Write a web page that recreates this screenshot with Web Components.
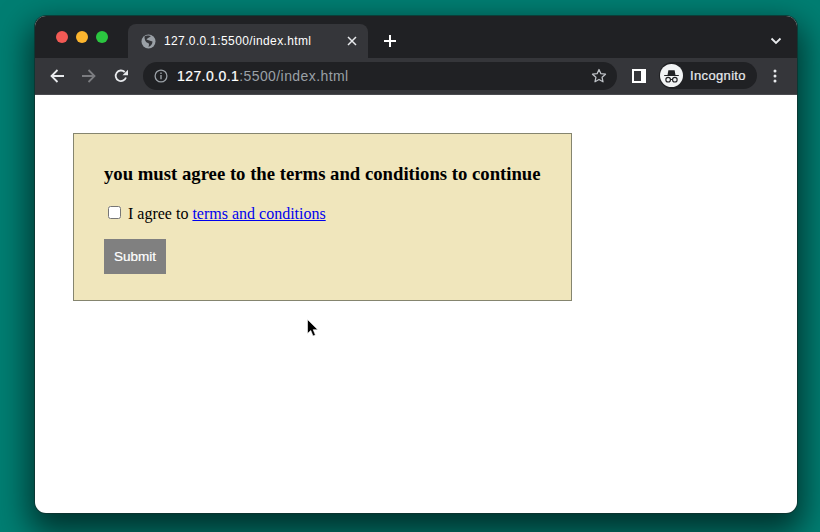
<!DOCTYPE html>
<html>
<head>
<meta charset="utf-8">
<title>terms</title>
<style>
html, body { margin: 0; height: 532px; overflow: hidden; }
body { background: #007e72; font-family: "Liberation Serif", serif; }
</style>
</head>
<body>
<browser-window>
  <terms-card>
    <span slot="title">you must agree to the terms and conditions to continue</span>
  </terms-card>
</browser-window>
<script>
class tabStrip extends HTMLElement {
    constructor() {
        super();
        this.attachShadow({ mode: 'open' });
    }
    connectedCallback() {
        this.shadowRoot.innerHTML = `
        <style>
            :host { display: flex; height: 42px; background: #202124; box-sizing: border-box; padding-top: 8px; color: #fff; font: 12px "Liberation Sans", Arial, sans-serif; }
            .lights { display: flex; gap: 8px; width: 93px; box-sizing: border-box; padding: 7px 0 0 21px; }
            .lights i { width: 12px; height: 12px; border-radius: 50%; }
            .tab { display: flex; align-items: center; width: 240px; height: 34px; background: #35363a; border-radius: 8px 8px 0 0; box-sizing: border-box; padding: 0 0 0 13px; }
            .tab span { margin-left: 8px; width: 183px; white-space: nowrap; letter-spacing: .37px; }
            .add { margin: 10px 0 0 15px; }
            .more { margin: 13px 15px 0 auto; }
            svg { display: block; flex: none; }
        </style>
        <div class="lights"><i style="background:#f25a55"></i><i style="background:#fcb52e"></i><i style="background:#2bc640"></i></div>
        <div class="tab">
            <svg width="15" height="15" viewBox="0 0 15 15"><circle cx="7.500" cy="7.500" r="7" fill="#9aa0a6"/><path d="M3.500 2.500C5 1.500 8 1 10 2 8.500 3.500 6.500 4 5.500 5.500 7 6.500 9.500 6.500 11.500 7.500 11.500 10 10 12 7.500 13 8 11 8.500 9.500 7 9 5.500 8.500 3.500 7 3.500 2.500z" fill="#35363a"/></svg>
            <span>127.0.0.1:5500/index.html</span>
            <svg width="10" height="10" viewBox="0 0 10 10" stroke="#e8eaed" stroke-width="1.500" fill="none"><path d="M1 1l8 8M9 1l-8 8"/></svg>
        </div>
        <svg class="add" width="14" height="14" viewBox="0 0 14 14" stroke="#fff" stroke-width="2" fill="none"><path d="M7 1v12M1 7h12"/></svg>
        <svg class="more" width="12" height="8" viewBox="0 0 12 8" stroke="#e8eaed" stroke-width="1.800" fill="none"><path d="M1.500 1.500 6 6l4.500-4.500"/></svg>
        `;
    }
}

class browserToolbar extends HTMLElement {
    constructor() {
        super();
        this.attachShadow({ mode: 'open' });
    }
    connectedCallback() {
        this.shadowRoot.innerHTML = `
        <style>
            :host { display: flex; align-items: center; height: 37px; background: #35363a; border-bottom: 1px solid #4a4b4f; box-sizing: border-box; padding: 0 0 1px 15px; font: 14px "Liberation Sans", Arial, sans-serif; color: #fff; }
            svg { display: block; flex: none; }
            .nav { display: flex; align-items: center; gap: 18px; }
            .omni { display: flex; align-items: center; width: 474px; height: 28px; margin-left: 15px; background: #202124; border-radius: 14px; box-sizing: border-box; padding: 0 10px 0 11px; }
            .url { margin-left: 9px; flex: 1; color: #9aa0a6; white-space: nowrap; letter-spacing: .42px; }
            .url b { font-weight: 400; color: #fff; -webkit-text-stroke: .2px #fff; }
            .side { margin-left: 15px; }
            .who { display: flex; align-items: center; width: 98px; height: 27px; margin-left: 13px; background: #202124; border-radius: 14px; box-sizing: border-box; padding-left: 1px; font-size: 13px; letter-spacing: .35px; color: #e8eaed; -webkit-text-stroke: .2px #e8eaed; }
            .who span { margin-left: 7px; }
            .dots { margin-left: 16px; }
        </style>
        <div class="nav">
            <svg width="14" height="14" viewBox="0 0 14 14" stroke="#e8eaed" stroke-width="1.800" fill="none"><path d="M14 7H1.500M7.500 1 1.500 7l6 6"/></svg>
            <svg width="14" height="14" viewBox="0 0 14 14" stroke="#7b7c80" stroke-width="1.800" fill="none"><path d="M0 7h12.500M6.500 1l6 6-6 6"/></svg>
            <svg width="14" height="14" viewBox="0 0 14 14" fill="none"><path d="M12 8.500A5.300 5.300 0 1 1 10.700 3" stroke="#e8eaed" stroke-width="1.800"/><path d="M8.500 6.200H14V.7z" fill="#e8eaed"/></svg>
        </div>
        <div class="omni">
            <svg width="14" height="14" viewBox="0 0 14 14"><circle cx="7" cy="7" r="5.900" fill="none" stroke="#9aa0a6" stroke-width="1.300"/><path d="M6.300 6h1.400v4.200H6.300zM6.300 3.600h1.400V5H6.300z" fill="#9aa0a6"/></svg>
            <div class="url"><b>127.0.0.1</b>:5500/index.html</div>
            <svg width="16" height="15" viewBox="0 0 16 15"><path d="M8 1.500l1.900 4.200 4.600.5-3.400 3.100.9 4.500L8 11.500l-4 2.300.9-4.500L1.500 6.200l4.600-.5z" fill="none" stroke="#bdc1c6" stroke-width="1.300" stroke-linejoin="round"/></svg>
        </div>
        <svg class="side" width="14" height="14" viewBox="0 0 14 14"><path d="M0 0h14v14H0z" fill="#fff"/><path d="M2 2h7v10H2z" fill="#35363a"/></svg>
        <div class="who">
            <svg width="23" height="23" viewBox="0 0 22 22"><circle cx="11" cy="11" r="11" fill="#f1f3f4"/><path d="M4 10.500h14v1H4zM7.200 10.500 8 6h6l.8 4.500z" fill="#202124"/><circle cx="7.800" cy="15" r="2.200" fill="none" stroke="#202124" stroke-width="1.100"/><circle cx="14.200" cy="15" r="2.200" fill="none" stroke="#202124" stroke-width="1.100"/><path d="M10 14.800h2" stroke="#202124"/></svg>
            <span>Incognito</span>
        </div>
        <svg class="dots" width="4" height="14" viewBox="0 0 4 14" fill="#e8eaed"><circle cx="2" cy="2" r="1.500"/><circle cx="2" cy="7" r="1.500"/><circle cx="2" cy="12" r="1.500"/></svg>
        `;
    }
}

class termsCard extends HTMLElement {
    constructor() {
        super();
        this.attachShadow({ mode: 'open' });
    }
    connectedCallback() {
        this.shadowRoot.innerHTML = `
        <style>
            :host { display: block; width: 499px; height: 168px; box-sizing: border-box; background: #f0e6bc; border: 1px solid #85856f; padding: 0 30px; color: #000; font: 16px "Liberation Serif", "Times New Roman", serif; }
            h3 { margin: 29px 0 0; font-size: 18.720px; line-height: 22px; font-weight: 700; white-space: nowrap; }
            label { display: flex; align-items: center; height: 18px; margin-top: 20px; }
            input { width: 13px; height: 13px; margin: -3px 7px 0 4px; }
            a { color: #0000ee; margin-left: 4px; }
            button { display: block; width: 62px; height: 35px; margin-top: 16px; border: 0; padding: 0 0 1px; background: #808080; color: #fff; font: 13.500px "Liberation Sans", Arial, sans-serif; -webkit-text-stroke: .2px #fff; }
        </style>
        <h3><slot name="title"></slot></h3>
        <label><input type="checkbox"><span>I agree to</span><a href="#">terms and conditions</a></label>
        <button>Submit</button>
        `;
    }
}

class browserWindow extends HTMLElement {
    constructor() {
        super();
        this.attachShadow({ mode: 'open' });
    }
    connectedCallback() {
        this.shadowRoot.innerHTML = `
        <style>
            :host { display: block; position: relative; width: 762px; height: 497px; margin: 16px 0 0 35px; background: #fff; border-radius: 11px; box-shadow: 0 0 0 1px rgba(15,50,46,.75), 0 14px 32px 6px rgba(0,0,0,.6); }
            .clip { height: 100%; border-radius: 11px; overflow: hidden; }
            .page { padding: 38px; }
            .cursor { position: absolute; left: 272px; top: 303px; }
        </style>
        <div class="clip">
            <tab-strip></tab-strip>
            <browser-toolbar></browser-toolbar>
            <div class="page"><slot></slot></div>
        </div>
        <svg class="cursor" width="12" height="19" viewBox="0 0 12 19"><path d="M.5.500v14l3.300-3 2.200 5.500 2.400-1-2.200-5.300h4.600z" fill="#000" stroke="#fff" stroke-width=".6"/></svg>
        `;
    }
}

window.customElements.define('tab-strip', tabStrip);
window.customElements.define('browser-toolbar', browserToolbar);
window.customElements.define('terms-card', termsCard);
window.customElements.define('browser-window', browserWindow);
</script>
</body>
</html>
